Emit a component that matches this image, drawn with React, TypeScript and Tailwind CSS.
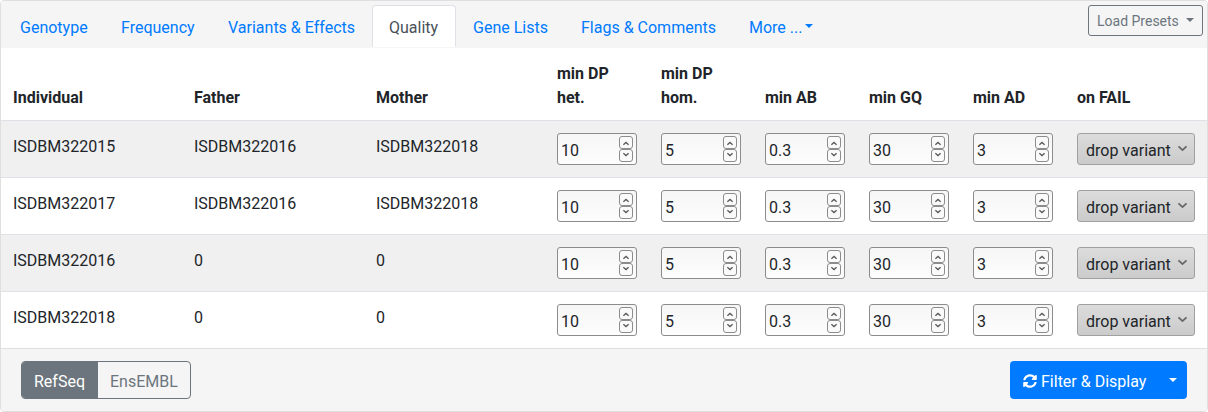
import React from "react";

const tabs = [
  { label: "Genotype", width: "w-[101px]" },
  { label: "Frequency", width: "w-[107px]" },
  { label: "Variants & Effects", width: "w-[161px]" },
  { label: "Quality", width: "w-[84px]" },
  { label: "Gene Lists", width: "w-[108px]" },
  { label: "Flags & Comments", width: "w-[168px]" },
];

const people = [
  ["ISDBM322015", "ISDBM322016", "ISDBM322018"],
  ["ISDBM322017", "ISDBM322016", "ISDBM322018"],
  ["ISDBM322016", "0", "0"],
  ["ISDBM322018", "0", "0"],
];

const thresholds = ["10", "5", "0.3", "30", "3"];

const headings = ["Individual", "Father", "Mother", "min DP het.", "min DP hom.", "min AB", "min GQ", "min AD", "on FAIL"];

const columns = "grid grid-cols-[181px_182px_181px_104px_104px_104px_104px_104px_142px]";

function Caret({ className = "" }: { className?: string }) {
  return (
    <svg className={`inline-block h-1 w-2 shrink-0 ${className}`} viewBox="0 0 8 4" fill="currentColor">
      <path d="M0 0h8L4 4z" />
    </svg>
  );
}

function StepButton({ up = false }: { up?: boolean }) {
  return (
    <span
      className={`flex h-[13px] w-[14px] items-center justify-center rounded-[3px] border border-[#8c8c8c] bg-[#fafafa] ${
        up ? "pt-[2px]" : "pb-[2px]"
      }`}
    >
      <svg width="8" height="5" viewBox="0 0 8 5" fill="none" stroke="#5a5a5a" strokeWidth="1.3">
        <path d={up ? "M1.4 3.8 4 1.4 6.6 3.8" : "M1.4 1.2 4 3.6 6.6 1.2"} />
      </svg>
    </span>
  );
}

function NumberField({ value }: { value: string }) {
  return (
    <div className="flex h-8 w-20 items-center justify-between rounded-[3px] border border-[#8c8c8c] bg-linear-to-b from-[#f6f6f6] to-[#fdfdfd] px-[3px]">
      <span className="pt-1">{value}</span>
      <span className="flex flex-col">
        <StepButton up />
        <StepButton />
      </span>
    </div>
  );
}

function FailSelect() {
  return (
    <div className="flex h-8 w-[118px] items-center justify-between rounded-[3px] border border-[#a0a0a0] bg-linear-to-b from-[#dcdcdc] to-[#cbcbcb] pr-[6px] pl-[8px]">
      <span className="pt-1 whitespace-nowrap">drop variant</span>
      <svg className="mb-[1px] shrink-0" width="11" height="7" viewBox="0 0 11 7" fill="none" stroke="#666" strokeWidth="1.8">
        <path d="M1.5 1.3 5.5 5.1 9.5 1.3" />
      </svg>
    </div>
  );
}

function SyncIcon() {
  return (
    <svg className="mr-1 h-[14px] w-[14px] shrink-0" viewBox="0 0 512 512" fill="currentColor">
      <path d="M370.72 133.28C339.458 104.008 298.888 87.962 255.848 88c-77.458.068-144.328 53.178-162.791 126.85-1.344 5.363-6.122 9.15-11.651 9.15H24.103c-7.498 0-13.194-6.807-11.807-14.176C33.933 94.924 134.813 8 256 8c66.448 0 126.791 26.136 171.315 68.685L463.03 40.97C478.149 25.851 504 36.559 504 57.941V192c0 13.255-10.745 24-24 24H345.941c-21.382 0-32.09-25.851-16.971-40.971l41.75-41.749zM32 296h134.059c21.382 0 32.09 25.851 16.971 40.971l-41.75 41.75c31.262 29.273 71.835 45.319 114.876 45.28 77.418-.07 144.315-53.144 162.787-126.849 1.344-5.363 6.122-9.15 11.651-9.15h57.304c7.498 0 13.194 6.807 11.807 14.176C478.067 417.076 377.187 504 256 504c-66.448 0-126.791-26.136-171.315-68.685L48.97 471.03C33.851 486.149 8 475.441 8 454.059V320c0-13.255 10.745-24 24-24z" />
    </svg>
  );
}

export default function App() {
  return (
    <main className="flex h-[412px] w-[1208px] flex-col overflow-hidden rounded-[4px] border border-[#dfdfdf] bg-white font-['Roboto',sans-serif] text-base text-[#212529]">
      <header className="flex h-[47px] justify-between bg-[#f5f5f5] pt-1 pr-1 pl-[2px]">
        <nav className="flex h-[42px]">
          {tabs.map(({ label, width }) => (
            <a
              key={label}
              className={`${width} rounded-t-[4px] border pt-[10px] pl-4 whitespace-nowrap ${
                label === "Quality"
                  ? "border-[#dee2e6] border-b-white bg-white text-[#495057]"
                  : "border-transparent text-[#007bff]"
              }`}
            >
              {label}
            </a>
          ))}
          <a className="flex items-start border border-transparent pt-[10px] pl-4 text-[#007bff]">
            More ...
            <Caret className="mt-2 ml-[3px]" />
          </a>
        </nav>
        <button className="flex h-[31px] w-[115px] items-start justify-between rounded-[3px] border border-[#6c757d] pt-[5px] pr-2 pl-2 text-sm leading-[21px] text-[#6c757d]">
          Load Presets
          <Caret className="mt-[7px]" />
        </button>
      </header>

      <section>
        <div className={`${columns} h-[72px] items-end pb-[10px] font-bold`}>
          {headings.map((heading) => (
            <div key={heading} className="px-3">
              {heading}
            </div>
          ))}
        </div>
        {people.map((person) => (
          <div
            key={person[0]}
            className={`${columns} h-[57px] border-t border-[#dee2e6] pt-3 odd:bg-white even:bg-[#f0f0f0]`}
          >
            {person.map((name, i) => (
              <div key={i} className="px-3 pt-[2px]">
                {name}
              </div>
            ))}
            {thresholds.map((value, i) => (
              <div key={i} className="px-3">
                <NumberField value={value} />
              </div>
            ))}
            <div className="px-3">
              <FailSelect />
            </div>
          </div>
        ))}
      </section>

      <footer className="flex flex-1 items-start justify-between border-t border-[#dfdfdf] bg-[#f5f5f5] px-5 pt-3">
        <div className="flex h-[38px] w-[170px] overflow-hidden rounded-[4px] border border-[#6c757d]">
          <button className="w-[76px] bg-[#6c757d] pt-[3px] pl-3 text-left text-white">RefSeq</button>
          <button className="pt-[3px] pl-3 text-[#6c757d]">EnsEMBL</button>
        </div>
        <div className="flex h-[38px] w-[177px] justify-between rounded-[4px] bg-[#007bff] text-white">
          <button className="flex items-center pt-[2px] pl-[13px]">
            <SyncIcon />
            <span className="pt-[2px]">Filter &amp; Display</span>
          </button>
          <button className="flex items-center pr-[10px]">
            <Caret />
          </button>
        </div>
      </footer>
    </main>
  );
}
